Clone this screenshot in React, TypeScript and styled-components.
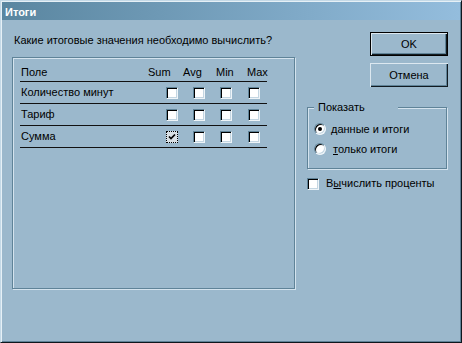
import styled, { createGlobalStyle, css } from 'styled-components';

const face = '#9bb8cc';
const shadow = '#5f8398';
const light = '#d4e3ee';

const GlobalStyle = createGlobalStyle`
  html, body {
    margin: 0;
    padding: 0;
    background: ${face};
  }
  body {
    font-family: 'Liberation Sans', Arial, sans-serif;
    font-size: 11px;
    line-height: 13px;
    color: #000;
  }
`;

const Window = styled.div`
  box-sizing: border-box;
  width: 462px;
  height: 343px;
  background: ${face};
  border: 1px solid;
  border-color: #c4d9e7 #0e171d #0e171d #c4d9e7;
  box-shadow: inset 1px 1px 0 #e6f0f6, inset -1px -1px 0 ${shadow};
  padding: 1px;
  display: flex;
  flex-direction: column;
`;

const TitleBar = styled.div`
  height: 18px;
  box-sizing: border-box;
  padding: 4px 0 0 3px;
  background: linear-gradient(to right, #5a86a0, #94bddd);
  color: #fff;
  font-weight: bold;
  font-size: 11px;
  line-height: 13px;
`;

const Body = styled.div`
  display: flex;
  gap: 11px;
  padding: 12px 0 0 10px;
`;

const LeftColumn = styled.div`
  width: 284px;
  display: flex;
  flex-direction: column;
`;

const Prompt = styled.div`
  margin: 2px 0 10px 2px;
`;

const etched = css`
  border: 1px solid ${shadow};
  box-shadow: inset 1px 1px 0 ${light}, 1px 1px 0 ${light};
`;

const FieldsPanel = styled.div`
  ${etched};
  box-sizing: border-box;
  width: 283px;
  height: 232px;
  padding: 8px 0 0 7px;
`;

const HeaderRow = styled.div`
  display: grid;
  grid-template-columns: 128px 35px 33px 31px 20px;
  width: 247px;
  height: 15px;
  border-bottom: 1px solid #111;
`;

const HeaderCell = styled.span<{ $first?: boolean }>`
  padding-left: ${(p) => (p.$first ? 1 : 0)}px;
  white-space: nowrap;
`;

const FieldRow = styled.div`
  display: grid;
  grid-template-columns: 146px 27px 27px 28px 19px;
  align-items: center;
  width: 247px;
  height: 21px;
  border-bottom: 1px solid #111;
`;

const FieldName = styled.span`
  padding-left: 1px;
  white-space: nowrap;
`;

const Check = styled.span<{ $focused?: boolean }>`
  box-sizing: border-box;
  width: 12px;
  height: 12px;
  display: flex;
  align-items: center;
  justify-content: center;
  background: #fff;
  border: 1px solid;
  border-color: ${shadow} #eef4f8 #eef4f8 ${shadow};
  box-shadow: inset 1px 1px 0 #000, inset -1px -1px 0 #c4d6e2;
  ${(p) =>
    p.$focused &&
    css`
      background: #d9e0e5;
      border: 1px dotted #000;
      box-shadow: none;
    `}
`;

const RightColumn = styled.div`
  width: 141px;
  display: flex;
  flex-direction: column;
`;

const Button = styled.div<{ $default?: boolean }>`
  box-sizing: border-box;
  align-self: flex-end;
  width: 78px;
  height: 24px;
  margin-bottom: 7px;
  display: flex;
  align-items: center;
  justify-content: center;
  background: ${face};
  box-shadow: inset 1px 1px 0 #dce8f0, inset -1px -1px 0 #111a20,
    inset -2px -2px 0 ${shadow};
  ${(p) =>
    p.$default &&
    css`
      border: 1px solid #000;
    `}
`;

const GroupBox = styled.fieldset`
  ${etched};
  box-sizing: border-box;
  min-inline-size: 0;
  width: 140px;
  margin: 7px 0 0;
  padding: 5px 0 9px 6px;
`;

const Legend = styled.legend`
  box-sizing: border-box;
  width: 84px;
  padding: 0 0 0 4px;
  background: ${face};
`;

const OptionRow = styled.div`
  display: flex;
  align-items: center;
  height: 20px;
  gap: 5px;
`;

const Radio = styled.span<{ $on?: boolean }>`
  box-sizing: border-box;
  width: 12px;
  height: 12px;
  border-radius: 50%;
  background: #fff;
  border: 1px solid;
  border-color: ${shadow} #eef4f8 #eef4f8 ${shadow};
  box-shadow: inset 1px 1px 0 #000, inset -1px -1px 0 #c4d6e2;
  display: flex;
  align-items: center;
  justify-content: center;
  &::after {
    content: '';
    width: 4px;
    height: 4px;
    border-radius: 50%;
    background: ${(p) => (p.$on ? '#000' : 'transparent')};
  }
`;

const OptionLabel = styled.span<{ $shift?: number }>`
  padding-left: ${(p) => p.$shift ?? 0}px;
`;

const Mnemonic = styled.span`
  text-decoration: underline;
`;

const PercentRow = styled.div`
  display: flex;
  align-items: center;
  gap: 7px;
  margin-top: 8px;
`;

const CheckMark = () => (
  <svg width="8" height="8" viewBox="0 0 8 8">
    <polyline points="1,3.5 3,5.5 7,1.5" fill="none" stroke="#000" strokeWidth="1.7" />
  </svg>
);

const fields = [
  { name: 'Количество минут', checks: [false, false, false, false] },
  { name: 'Тариф', checks: [false, false, false, false] },
  { name: 'Сумма', checks: [true, false, false, false] },
];

export default function App() {
  return (
    <>
      <GlobalStyle />
      <Window>
        <TitleBar>Итоги</TitleBar>
        <Body>
          <LeftColumn>
            <Prompt>Какие итоговые значения необходимо вычислить?</Prompt>
            <FieldsPanel>
              <HeaderRow>
                <HeaderCell $first>Поле</HeaderCell>
                <HeaderCell>Sum</HeaderCell>
                <HeaderCell>Avg</HeaderCell>
                <HeaderCell>Min</HeaderCell>
                <HeaderCell>Max</HeaderCell>
              </HeaderRow>
              {fields.map((f) => (
                <FieldRow key={f.name}>
                  <FieldName>{f.name}</FieldName>
                  {f.checks.map((c, i) => (
                    <Check key={i} $focused={c}>
                      {c && <CheckMark />}
                    </Check>
                  ))}
                </FieldRow>
              ))}
            </FieldsPanel>
          </LeftColumn>
          <RightColumn>
            <Button $default>OK</Button>
            <Button>Отмена</Button>
            <GroupBox>
              <Legend>Показать</Legend>
              <OptionRow>
                <Radio $on />
                <OptionLabel>
                  <Mnemonic>д</Mnemonic>анные и итоги
                </OptionLabel>
              </OptionRow>
              <OptionRow>
                <Radio />
                <OptionLabel $shift={2}>
                  <Mnemonic>т</Mnemonic>олько итоги
                </OptionLabel>
              </OptionRow>
            </GroupBox>
            <PercentRow>
              <Check />
              <span>
                В<Mnemonic>ы</Mnemonic>числить проценты
              </span>
            </PercentRow>
          </RightColumn>
        </Body>
      </Window>
    </>
  );
}
